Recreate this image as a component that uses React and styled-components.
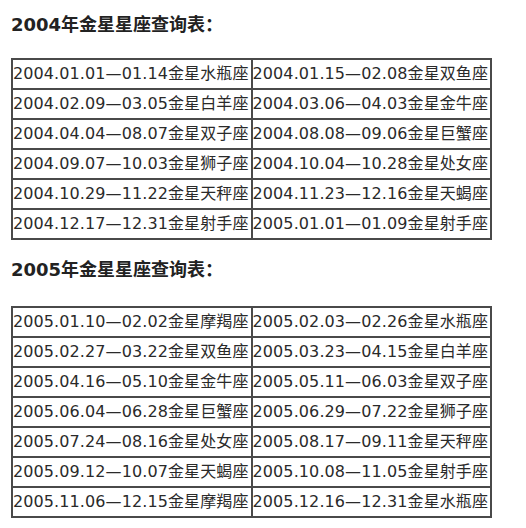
import React from "react";
import styled, { createGlobalStyle } from "styled-components";

const GlobalStyle = createGlobalStyle`
  body {
    margin: 0;
    background: #fff;
    font-family: "DejaVu Sans", "Noto Sans CJK SC", sans-serif;
    color: #333;
  }
`;

const Page = styled.div`
  padding: 13px 11px 0;
`;

const Heading = styled.div`
  margin-top: ${props => (props.$first ? 0 : 18)}px;
  font-size: 18px;
  font-weight: bold;
  line-height: 24px;
  color: #222;
`;

const Table = styled.table`
  margin-top: ${props => props.$gap}px;
  border: 1px solid #4a4a4a;
  border-spacing: 0;
  font-size: 16px;
`;

const Cell = styled.td`
  border: 1px solid #4a4a4a;
  padding: 0 2px 0 0;
  height: 28px;
  line-height: 28px;
  white-space: nowrap;
  letter-spacing: 0.1px;
  color: #2a2a2a;
`;

const data2004 = [
  ["2004.01.01—01.14金星水瓶座", "2004.01.15—02.08金星双鱼座"],
  ["2004.02.09—03.05金星白羊座", "2004.03.06—04.03金星金牛座"],
  ["2004.04.04—08.07金星双子座", "2004.08.08—09.06金星巨蟹座"],
  ["2004.09.07—10.03金星狮子座", "2004.10.04—10.28金星处女座"],
  ["2004.10.29—11.22金星天秤座", "2004.11.23—12.16金星天蝎座"],
  ["2004.12.17—12.31金星射手座", "2005.01.01—01.09金星射手座"],
];

const data2005 = [
  ["2005.01.10—02.02金星摩羯座", "2005.02.03—02.26金星水瓶座"],
  ["2005.02.27—03.22金星双鱼座", "2005.03.23—04.15金星白羊座"],
  ["2005.04.16—05.10金星金牛座", "2005.05.11—06.03金星双子座"],
  ["2005.06.04—06.28金星巨蟹座", "2005.06.29—07.22金星狮子座"],
  ["2005.07.24—08.16金星处女座", "2005.08.17—09.11金星天秤座"],
  ["2005.09.12—10.07金星天蝎座", "2005.10.08—11.05金星射手座"],
  ["2005.11.06—12.15金星摩羯座", "2005.12.16—12.31金星水瓶座"],
];

function VenusTable({ rows, gap }) {
  return (
    <Table $gap={gap}>
      <tbody>
        {rows.map((r, i) => (
          <tr key={i}>
            <Cell>{r[0]}</Cell>
            <Cell>{r[1]}</Cell>
          </tr>
        ))}
      </tbody>
    </Table>
  );
}

export default function App() {
  return (
    <Page>
      <GlobalStyle />
      <Heading $first>2004年金星星座查询表：</Heading>
      <VenusTable rows={data2004} gap={21} />
      <Heading>2005年金星星座查询表：</Heading>
      <VenusTable rows={data2005} gap={24} />
    </Page>
  );
}
